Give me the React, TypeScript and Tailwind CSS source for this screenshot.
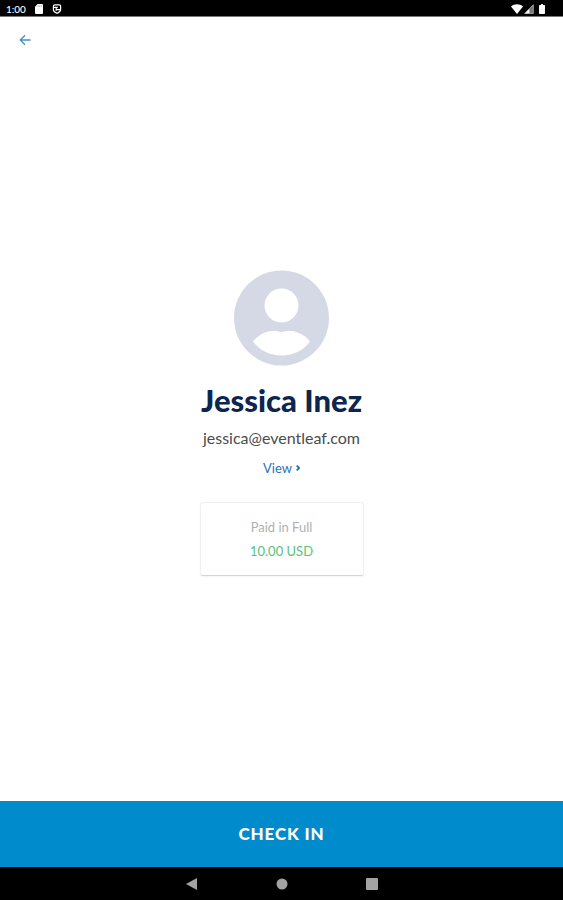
import React from "react";

function StatusBar() {
  return (
    <div className="flex h-[17px] shrink-0 items-center justify-between border-b border-[#777777] bg-black pt-0.5 pr-[18px] pl-1.5 text-white">
      <div className="flex items-center gap-2">
        <span className="text-[10px] leading-3 font-medium">1:00</span>
        <svg className="h-2.5 w-2.5" viewBox="0 0 10 10" fill="currentColor" aria-hidden="true">
          <path d="M3.6 0H8a1 1 0 0 1 1 1v8a1 1 0 0 1-1 1H2a1 1 0 0 1-1-1V2.8z" />
          <path d="M4 1.4v1.4M5.6 1.4v1.4M7.2 1.4v1.4" stroke="#777777" strokeWidth=".6" />
        </svg>
        <svg className="h-2.5 w-2.5" viewBox="0 0 10 10" fill="none" stroke="currentColor" strokeWidth="1.2" aria-hidden="true">
          <path d="M2.8.8h4.4a1.4 1.4 0 0 1 1.4 1.4v3.6c0 1.6-1.6 2.6-3.6 3.5-2-.9-3.6-1.9-3.6-3.5V2.2A1.4 1.4 0 0 1 2.8.8z" />
          <path d="M1.6 3.4h4.2M4 5.6h4.4M4.2 3.4v3.4" />
        </svg>
      </div>
      <div className="flex items-center gap-px">
        <svg className="h-2.5 w-3" viewBox="0 0 12 10" fill="currentColor" aria-hidden="true">
          <path d="M0 2.6C1.6 1 3.8.2 6 .2s4.4.8 6 2.4L6 10z" />
        </svg>
        <svg className="h-2.5 w-2.5" viewBox="0 0 10 10" fill="currentColor" aria-hidden="true">
          <path d="M9.5.3v9.5H.3z" fill="#777777" />
          <path d="M5.4 4.4v5.4H.3z" />
          <path d="M9.3.8v8.6H1z" fill="none" stroke="#aaaaaa" strokeWidth=".8" />
        </svg>
        <svg className="ml-1 h-2.5 w-1.5" viewBox="0 0 6 10" fill="currentColor" aria-hidden="true">
          <path d="M2 0h2v1h1.2a.8.8 0 0 1 .8.8v7.4a.8.8 0 0 1-.8.8H.8a.8.8 0 0 1-.8-.8V1.8A.8.8 0 0 1 .8 1H2z" />
        </svg>
      </div>
    </div>
  );
}

function Avatar() {
  return (
    <svg className="size-24" viewBox="0 0 96 96" role="img" aria-label="Profile picture">
      <circle cx="47.5" cy="48" r="47.5" fill="#d4d9e5" />
      <circle cx="47.5" cy="35.5" r="17" fill="#ffffff" />
      <path
        d="M19 71.5C25 63.5 34.5 60.5 40.5 60.7c3 .1 4.500 1.300 7 1.300s4-1.200 7-1.300c6-.2 15.500 2.800 21.500 10.800C70 80 59.500 85.500 47.500 85.500S25 80 19 71.500z"
        fill="#ffffff"
      />
    </svg>
  );
}

function NavigationBar() {
  return (
    <nav className="flex h-[33px] shrink-0 items-center justify-center gap-[74px] bg-black text-[#a2a2a2]" aria-label="System">
      <button type="button" aria-label="Back">
        <svg className="size-4" viewBox="0 0 16 16" fill="currentColor" aria-hidden="true">
          <path d="M2 8 13 2v12z" />
        </svg>
      </button>
      <button type="button" aria-label="Home">
        <svg className="size-4" viewBox="0 0 16 16" fill="currentColor" aria-hidden="true">
          <circle cx="8" cy="8" r="5.5" />
        </svg>
      </button>
      <button type="button" aria-label="Recent apps">
        <svg className="size-4" viewBox="0 0 16 16" fill="currentColor" aria-hidden="true">
          <rect x="2" y="2" width="12" height="12" rx="1" />
        </svg>
      </button>
    </nav>
  );
}

export default function App() {
  return (
    <div className="flex min-h-screen flex-col bg-white font-[Lato,sans-serif]">
      <StatusBar />
      <header className="flex h-8 shrink-0 items-end px-4">
        <button type="button" aria-label="Go back" className="p-[3px] text-[#448fcb]">
          <svg className="h-3 w-3" viewBox="0 0 12 12" fill="none" stroke="currentColor" strokeWidth="1.3" aria-hidden="true">
            <path d="M11.7 6H1.5M6 1.2 1.3 6 6 10.8" />
          </svg>
        </button>
      </header>
      <main className="flex flex-1 flex-col items-center justify-center pb-1">
        <Avatar />
        <h1 className="mt-3.5 text-[31px] leading-10 font-black text-[#0c2650]">Jessica Inez</h1>
        <p className="mt-2 text-base leading-5 text-[#4c4c4c]">jessica@eventleaf.com</p>
        <a href="#details" className="mt-2.5 flex items-center gap-1 text-[13px] leading-5 text-[#2873b7]">
          View
          <svg className="h-1.5 w-1" viewBox="0 0 4 6" fill="none" stroke="currentColor" strokeWidth="1.8" aria-hidden="true">
            <path d="M.7.5 3.2 3 .7 5.5" />
          </svg>
        </a>
        <section className="mt-6 flex w-[164px] flex-col items-center rounded-[3px] border border-[#f0f0f0] border-b-[#d4d4d4] py-3.5 text-[13px] shadow-xs">
          <p className="leading-5 text-[#b0b0b0]">Paid in Full</p>
          <p className="mt-1 leading-5 text-[#5cc178]">10.00 USD</p>
        </section>
      </main>
      <button type="button" className="h-[66px] w-full shrink-0 bg-[#008ccc] text-[17px] font-black tracking-wider text-white">
        CHECK IN
      </button>
      <NavigationBar />
    </div>
  );
}
